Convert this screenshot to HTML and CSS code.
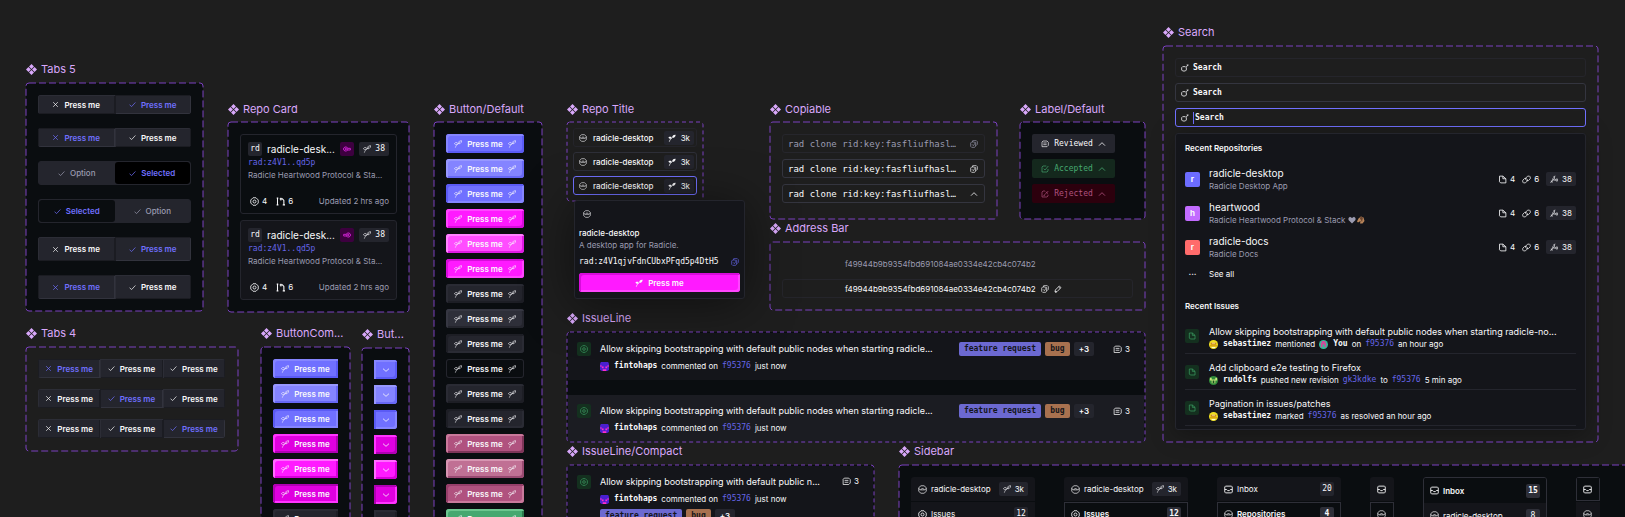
FILE: index.html
```
<!DOCTYPE html>
<html lang="en">
<head>
<meta charset="utf-8">
<title>Components</title>
<link rel="stylesheet" href="styles.css">
</head>
<body>
<svg class="sprite" aria-hidden="true">
  <symbol id="component" viewBox="0 0 12 12"><path d="M6 0 8.700 2.700 6 5.400 3.300 2.700zM6 6.600 8.700 9.300 6 12 3.300 9.300zM2.700 3.300 5.400 6 2.700 8.700 0 6zM9.300 3.300 12 6 9.300 8.700 6.600 6z" fill="currentColor"/></symbol>
  <symbol id="seed" viewBox="0 0 12 12"><path d="M2 11.500C2.500 9 4 7.500 6.500 5.500L9.500 3M0.500 5.500 2 4H4.500L5.500 5 4.500 7 2.500 7zM6.500 5.500 6.500 3.500 8.500 1.500 11.500 1 11 3.500 9 5.500z" fill="none" stroke="currentColor" stroke-width="0.900"/></symbol>
  <symbol id="seedfill" viewBox="0 0 12 12"><path d="M0.500 5.500 2 4H4.500L5.500 5 4.500 7H2.500zM6.500 5.500V3.500L8.500 1.500 11.500 1 11 3.500 9 5.500z" fill="currentColor"/><path d="M2 11.500C2.500 9 4 7.500 6.500 5.500" fill="none" stroke="currentColor" stroke-width="1.200"/></symbol>
  <symbol id="fork" viewBox="0 0 12 12"><path d="M0.500 11.500 5 7.500H9M2 8 2 10.500H4.500M4 5.500V8.500M4 5.500 6.500 7.500M6 5 7.500 1M6 1.500 6 5 8 6.500M9 6H11.500V9H9z" fill="none" stroke="currentColor" stroke-width="0.900"/></symbol>
  <symbol id="x" viewBox="0 0 12 12"><path d="M2 2 10 10M10 2 2 10" fill="none" stroke="currentColor" stroke-width="1.200"/></symbol>
  <symbol id="check" viewBox="0 0 12 12"><path d="M1 6.5 4.500 9.500 11 2.500" fill="none" stroke="currentColor" stroke-width="1.200"/></symbol>
  <symbol id="down" viewBox="0 0 12 12"><path d="M1.500 4 6 8 10.500 4" fill="none" stroke="currentColor" stroke-width="1.200"/></symbol>
  <symbol id="up" viewBox="0 0 12 12"><path d="M1.500 8.500 6 4 10.500 8.500" fill="none" stroke="currentColor" stroke-width="1.200"/></symbol>
  <symbol id="target" viewBox="0 0 12 12"><path d="M4 1H8L11 4V8L8 11H4L1 8V4z" fill="none" stroke="currentColor" stroke-width="1.100"/><circle cx="6" cy="6" r="2" fill="none" stroke="currentColor" stroke-width="1.100"/></symbol>
  <symbol id="patch" viewBox="0 0 12 12"><path d="M2 1V11M1 1.500H3M0.800 10.500H3.200M5 2.500H8.500L10.500 4.500V10.500M9 10.500H12M6.500 1V4.500" fill="none" stroke="currentColor" stroke-width="1.400"/></symbol>
  <symbol id="repo" viewBox="0 0 12 12"><path d="M4 1H8L11 3.500V8.500L8 11H4L1 8.500V3.500zM1 5 3.500 6.500H8.500L11 5M3.500 6.500 6 4 8.500 6.500" fill="none" stroke="currentColor" stroke-width="0.900"/></symbol>
  <symbol id="copy" viewBox="0 0 12 12"><path d="M4 1H9.500L11 2.500V6.500L9.500 8H8.500M1 4.500 2.500 3H6.500L8.500 5V9L7 11H2.500L1 9.500zM3 6.500 5 8.500 8.500 3.500M4 1 3.500 3" fill="none" stroke="currentColor"/></symbol>
  <symbol id="pen" viewBox="0 0 12 12"><path d="M1.500 10.500 2 7.500 8 1.500 10.500 4 4.500 10zM7 3 9 5M1.500 10.500H4" fill="none" stroke="currentColor" stroke-width="1.200"/></symbol>
  <symbol id="comment" viewBox="0 0 12 12"><path d="M3 1.500H9L11 3.500V8L9 10H1.500V3zM3.500 4.500H8.500M3.500 7H8.500" fill="none" stroke="currentColor"/></symbol>
  <symbol id="accepted" viewBox="0 0 12 12"><path d="M8 1.500H3L1.500 3V10.500H9L10.500 9V6M4 5.500 6 7.500 11 1.500" fill="none" stroke="currentColor"/></symbol>
  <symbol id="rejected" viewBox="0 0 12 12"><path d="M6 1.500H3L1.500 3V10.500H9L10.500 9V7M5 7.500 11 1.500M7 2.500 10.500 5.500M3.500 8.500H6" fill="none" stroke="currentColor"/></symbol>
  <symbol id="file" viewBox="0 0 12 12"><path d="M2 1.500H6.500L10.500 5V10.500H3.500L2 9zM6.500 1.500V5H10.500" fill="none" stroke="currentColor" stroke-width="1.100"/></symbol>
  <symbol id="link" viewBox="0 0 12 12"><path d="M5 6.500V4L7.500 1.500H10L11 2.500V5L8.500 7.500H6M7 5.500V8L4.500 10.500H2L1 9.500V7L3.500 4.500H6" fill="none" stroke="currentColor"/></symbol>
  <symbol id="search" viewBox="0 0 12 12"><path d="M2.500 4H6.500L8 5.500V9L6.500 10.500H2.500L1 9V5.500zM7.500 4.800 11 1.300M8.500 1.500H11" fill="none" stroke="currentColor" stroke-width="1.200"/></symbol>
  <symbol id="inbox" viewBox="0 0 12 12"><path d="M2 1.500H10L11 2.500V9.500L10 10.500H2L1 9.500V2.500zM1 6H3.500L5 7.500H7L8.500 6H11" fill="none" stroke="currentColor" stroke-width="1.200"/></symbol>
  <symbol id="key" viewBox="0 0 12 12"><path d="M3 3H5.500L7 5V7.500L5.500 9H3L1 7.500V4.500zM7 5H11V7.500H7M3.500 5H5V7H3.500z" fill="none" stroke="currentColor" stroke-width="1.400"/></symbol>
  <symbol id="keyr" viewBox="0 0 12 12"><path d="M9 3H6.500L5 5V7.500L6.500 9H9L11 7.500V4.500zM5 5H1V7.500H5M8.500 5H7V7H8.500z" fill="none" stroke="currentColor" stroke-width="1.400"/></symbol>
  <symbol id="ava-f" viewBox="0 0 10 10"><path d="M1 0H9L10 2V9L8 10H2L0 9V2z" fill="#4a1fd0"/><path d="M0 4H2V5H0zM8 4H10V5H8zM2 5H4V7H2zM6 5H8V7H6zM3 8H7V10H3z" fill="#ff2fc8"/></symbol>
  <symbol id="ava-s" viewBox="0 0 10 10"><circle cx="5" cy="5" r="5" fill="#f0e020"/><path d="M2 3H8V5H2zM1 6H9V7H1z" fill="#c06a10"/><path d="M3 8H7V9H3z" fill="#fff"/><path d="M3 3H7V4H3z" fill="#fff6b0"/></symbol>
  <symbol id="ava-y" viewBox="0 0 10 10"><circle cx="5" cy="5" r="5" fill="#2fc09a"/><path d="M3 1H7V3H8V8H6V5H4V8H2V3H3z" fill="#d04a9a"/></symbol>
  <symbol id="ava-r" viewBox="0 0 10 10"><circle cx="5" cy="5" r="5" fill="#2f8a3a"/><path d="M1 2H3V4H5V6H5V4H7V2H9V5H7V8H3V5H1z" fill="#c8e87a"/><path d="M4 5H6V8H4z" fill="#145020"/></symbol>
</svg>
<main class="canvas">

<section class="component tabs5">
  <h2><svg><use href="#component"/></svg>Tabs 5</h2>
  <div class="frame dark stack-lg"><svg class="outline"><rect width="100%" height="100%" rx="3"/></svg>
    <div class="tabs"><button class="tab sunk"><svg><use href="#x"/></svg>Press me</button><button class="tab raised accent"><svg><use href="#check"/></svg>Press me</button></div>
    <div class="tabs"><button class="tab raised accent"><svg><use href="#x"/></svg>Press me</button><button class="tab sunk"><svg><use href="#check"/></svg>Press me</button></div>
    <div class="tabs tall boxed"><button class="tab muted"><svg><use href="#check"/></svg>Option</button><button class="tab black accent"><svg><use href="#check"/></svg>Selected</button></div>
    <div class="tabs tall boxed"><button class="tab ink accent"><svg><use href="#check"/></svg>Selected</button><button class="tab muted"><svg><use href="#check"/></svg>Option</button></div>
    <div class="tabs tall"><button class="tab sunk"><svg><use href="#x"/></svg>Press me</button><button class="tab raised accent"><svg><use href="#check"/></svg>Press me</button></div>
    <div class="tabs tall"><button class="tab raised accent"><svg><use href="#x"/></svg>Press me</button><button class="tab sunk"><svg><use href="#check"/></svg>Press me</button></div>
  </div>
</section>

<section class="component high repo-card">
  <h2><svg><use href="#component"/></svg>Repo Card</h2>
  <div class="frame dark stack-sm"><svg class="outline"><rect width="100%" height="100%" rx="3"/></svg>
    <article class="card">
      <div class="card-head"><span class="badge mono">rd</span><span class="name">radicle-desk...</span><span class="badge pink"><svg><use href="#key"/></svg></span><span class="badge wide mono"><svg><use href="#seed"/></svg>38</span></div>
      <p class="mono link">rad:z4V1..qd5p</p>
      <p class="dim">Radicle Heartwood Protocol &amp; Sta...</p>
      <div class="card-foot"><span class="stat"><svg><use href="#target"/></svg>4</span><span class="stat"><svg><use href="#patch"/></svg>6</span><span class="dim push">Updated 2 hrs ago</span></div>
    </article>
    <article class="card float">
      <div class="card-head"><span class="badge mono">rd</span><span class="name">radicle-desk...</span><span class="badge pink"><svg><use href="#keyr"/></svg></span><span class="badge wide mono"><svg><use href="#seed"/></svg>38</span></div>
      <p class="mono link">rad:z4V1..qd5p</p>
      <p class="dim">Radicle Heartwood Protocol &amp; Sta...</p>
      <div class="card-foot"><span class="stat"><svg><use href="#target"/></svg>4</span><span class="stat"><svg><use href="#patch"/></svg>6</span><span class="dim push">Updated 2 hrs ago</span></div>
    </article>
  </div>
</section>

<section class="component tabs4">
  <h2><svg><use href="#component"/></svg>Tabs 4</h2>
  <div class="frame stack-md"><svg class="outline"><rect width="100%" height="100%" rx="3"/></svg>
    <div class="tabs"><button class="tab raised accent"><svg><use href="#x"/></svg>Press me</button><button class="tab sunk"><svg><use href="#check"/></svg>Press me</button><button class="tab sunk"><svg><use href="#check"/></svg>Press me</button></div>
    <div class="tabs"><button class="tab sunk"><svg><use href="#x"/></svg>Press me</button><button class="tab raised accent"><svg><use href="#check"/></svg>Press me</button><button class="tab sunk"><svg><use href="#check"/></svg>Press me</button></div>
    <div class="tabs"><button class="tab sunk"><svg><use href="#x"/></svg>Press me</button><button class="tab sunk"><svg><use href="#check"/></svg>Press me</button><button class="tab raised accent"><svg><use href="#check"/></svg>Press me</button></div>
  </div>
</section>

<section class="component button-combo">
  <h2><svg><use href="#component"/></svg>ButtonCom...</h2>
  <div class="frame dark stack-sm"><svg class="outline"><rect width="100%" height="100%" rx="3"/></svg>
    <button class="btn left violet"><svg><use href="#seed"/></svg>Press me</button>
    <button class="btn left violet hover"><svg><use href="#seed"/></svg>Press me</button>
    <button class="btn left violet active"><svg><use href="#seed"/></svg>Press me</button>
    <button class="btn left magenta"><svg><use href="#seed"/></svg>Press me</button>
    <button class="btn left magenta hover"><svg><use href="#seed"/></svg>Press me</button>
    <button class="btn left magenta active"><svg><use href="#seed"/></svg>Press me</button>
    <button class="btn left gray"><svg><use href="#seed"/></svg>Press me</button>
  </div>
</section>

<section class="component button-arrow">
  <h2><svg><use href="#component"/></svg>But...</h2>
  <div class="frame dark stack-sm"><svg class="outline"><rect width="100%" height="100%" rx="3"/></svg>
    <button class="btn right violet" aria-label="More"><svg><use href="#down"/></svg></button>
    <button class="btn right violet hover" aria-label="More"><svg><use href="#down"/></svg></button>
    <button class="btn right violet active" aria-label="More"><svg><use href="#down"/></svg></button>
    <button class="btn right magenta" aria-label="More"><svg><use href="#down"/></svg></button>
    <button class="btn right magenta hover" aria-label="More"><svg><use href="#down"/></svg></button>
    <button class="btn right magenta active" aria-label="More"><svg><use href="#down"/></svg></button>
    <button class="btn right gray" aria-label="More"><svg><use href="#down"/></svg></button>
  </div>
</section>

<section class="component high button-default">
  <h2><svg><use href="#component"/></svg>Button/Default</h2>
  <div class="frame dark stack-sm"><svg class="outline"><rect width="100%" height="100%" rx="3"/></svg>
    <button class="btn violet"><svg><use href="#seed"/></svg>Press me<svg><use href="#seed"/></svg></button>
    <button class="btn violet hover"><svg><use href="#seed"/></svg>Press me<svg><use href="#seed"/></svg></button>
    <button class="btn violet active"><svg><use href="#seed"/></svg>Press me<svg><use href="#seed"/></svg></button>
    <button class="btn pinkish"><svg><use href="#seed"/></svg>Press me<svg><use href="#seed"/></svg></button>
    <button class="btn pinkish hover"><svg><use href="#seed"/></svg>Press me<svg><use href="#seed"/></svg></button>
    <button class="btn pinkish active"><svg><use href="#seed"/></svg>Press me<svg><use href="#seed"/></svg></button>
    <button class="btn gray"><svg><use href="#seed"/></svg>Press me<svg><use href="#seed"/></svg></button>
    <button class="btn gray hover"><svg><use href="#seed"/></svg>Press me<svg><use href="#seed"/></svg></button>
    <button class="btn gray active"><svg><use href="#seed"/></svg>Press me<svg><use href="#seed"/></svg></button>
    <button class="btn hollow"><svg><use href="#seed"/></svg>Press me<svg><use href="#seed"/></svg></button>
    <button class="btn gray"><svg><use href="#seed"/></svg>Press me<svg><use href="#seed"/></svg></button>
    <button class="btn gray active"><svg><use href="#seed"/></svg>Press me<svg><use href="#seed"/></svg></button>
    <button class="btn rose"><svg><use href="#seed"/></svg>Press me<svg><use href="#seed"/></svg></button>
    <button class="btn rose hover"><svg><use href="#seed"/></svg>Press me<svg><use href="#seed"/></svg></button>
    <button class="btn rose active"><svg><use href="#seed"/></svg>Press me<svg><use href="#seed"/></svg></button>
    <button class="btn green"><svg><use href="#seed"/></svg>Press me<svg><use href="#seed"/></svg></button>
  </div>
</section>

<section class="component issue-line">
  <h2><svg><use href="#component"/></svg>IssueLine</h2>
  <div class="frame dark"><svg class="outline fine"><rect width="100%" height="100%" rx="3"/></svg>
    <article class="issue">
      <span class="state"><svg><use href="#target"/></svg></span>
      <div class="issue-text"><p class="issue-title">Allow skipping bootstrapping with default public nodes when starting radicle...</p>
      <p class="meta"><svg><use href="#ava-f"/></svg><b class="mono">fintohaps</b> commented on <a class="mono link" href="#f95376">f95376</a> just now</p></div>
      <div class="labels"><span class="label violet">feature request</span><span class="label brown">bug</span><span class="label more">+3</span><span class="stat count"><svg><use href="#comment"/></svg>3</span></div>
    </article>
    <article class="issue lit">
      <span class="state"><svg><use href="#target"/></svg></span>
      <div class="issue-text"><p class="issue-title">Allow skipping bootstrapping with default public nodes when starting radicle...</p>
      <p class="meta"><svg><use href="#ava-f"/></svg><b class="mono">fintohaps</b> commented on <a class="mono link" href="#f95376">f95376</a> just now</p></div>
      <div class="labels"><span class="label violet">feature request</span><span class="label brown">bug</span><span class="label more">+3</span><span class="stat count"><svg><use href="#comment"/></svg>3</span></div>
    </article>
  </div>
</section>

<section class="component issue-compact">
  <h2><svg><use href="#component"/></svg>IssueLine/Compact</h2>
  <div class="frame dark"><svg class="outline fine"><rect width="100%" height="100%" rx="3"/></svg>
    <article class="issue">
      <span class="state"><svg><use href="#target"/></svg></span>
      <div class="issue-text"><p class="issue-title">Allow skipping bootstrapping with default public n...</p>
      <p class="meta"><svg><use href="#ava-f"/></svg><b class="mono">fintohaps</b> commented on <a class="mono link" href="#f95376">f95376</a> just now</p>
      <div class="labels below"><span class="label violet">feature request</span><span class="label brown">bug</span><span class="label more">+3</span></div></div>
      <div class="labels"><span class="stat"><svg><use href="#comment"/></svg>3</span></div>
    </article>
  </div>
</section>

<section class="component high repo-title">
  <h2><svg><use href="#component"/></svg>Repo Title</h2>
  <div class="frame"><svg class="outline fine"><rect width="100%" height="100%" rx="3"/></svg>
    <button class="title-row"><svg><use href="#repo"/></svg><span>radicle-desktop</span><span class="badge wide"><svg><use href="#seedfill"/></svg>3k</span></button>
    <button class="title-row hover"><svg><use href="#repo"/></svg><span>radicle-desktop</span><span class="badge wide"><svg><use href="#seedfill"/></svg>3k</span></button>
    <button class="title-row open"><svg><use href="#repo"/></svg><span>radicle-desktop</span><span class="badge wide"><svg><use href="#seedfill"/></svg>3k</span></button>
    <div class="popover">
      <svg class="popover-icon"><use href="#repo"/></svg>
      <p class="strong">radicle-desktop</p>
      <p class="dim">A desktop app for Radicle.</p>
      <p class="mono popover-id">rad:z4V1qjvFdnCUbxPFqd5p4DtH5<svg class="link"><use href="#copy"/></svg></p>
      <button class="btn pinkish active"><svg><use href="#seedfill"/></svg>Press me</button>
    </div>
  </div>
</section>

<section class="component high copiable">
  <h2><svg><use href="#component"/></svg>Copiable</h2>
  <div class="frame stack-sm"><svg class="outline"><rect width="100%" height="100%" rx="3"/></svg>
    <button class="copy mono rest">rad clone rid:key:fasfliufhasl…<svg><use href="#copy"/></svg></button>
    <button class="copy mono">rad clone rid:key:fasfliufhasl…<svg><use href="#copy"/></svg></button>
    <button class="copy mono">rad clone rid:key:fasfliufhasl…<svg><use href="#up"/></svg></button>
  </div>
</section>

<section class="component high label-default">
  <h2><svg><use href="#component"/></svg>Label/Default</h2>
  <div class="frame dark stack-sm"><svg class="outline"><rect width="100%" height="100%" rx="3"/></svg>
    <button class="verdict mono"><svg><use href="#comment"/></svg>Reviewed<svg><use href="#up"/></svg></button>
    <button class="verdict mono ok"><svg><use href="#accepted"/></svg>Accepted<svg><use href="#up"/></svg></button>
    <button class="verdict mono bad"><svg><use href="#rejected"/></svg>Rejected<svg><use href="#up"/></svg></button>
  </div>
</section>

<section class="component address-bar">
  <h2><svg><use href="#component"/></svg>Address Bar</h2>
  <div class="frame stack-sm"><svg class="outline"><rect width="100%" height="100%" rx="3"/></svg>
    <div class="address dim">f49944b9b9354fbd691084ae0334e42cb4c074b2</div>
    <div class="address boxed">f49944b9b9354fbd691084ae0334e42cb4c074b2<svg><use href="#copy"/></svg><svg><use href="#pen"/></svg></div>
  </div>
</section>

<section class="component sidebar">
  <h2><svg><use href="#component"/></svg>Sidebar</h2>
  <div class="frame dark"><svg class="outline"><rect width="100%" height="100%" rx="3"/></svg>
    <nav class="menu">
      <a class="item" href="#repo-home"><svg><use href="#repo"/></svg>radicle-desktop<span class="badge wide"><svg><use href="#seed"/></svg>3k</span></a>
      <a class="item" href="#issues"><svg><use href="#target"/></svg>Issues<span class="badge mono">12</span></a>
    </nav>
    <nav class="menu">
      <a class="item" href="#repo-home"><svg><use href="#repo"/></svg>radicle-desktop<span class="badge wide"><svg><use href="#seed"/></svg>3k</span></a>
      <a class="item current" href="#issues"><svg><use href="#target"/></svg>Issues<span class="badge mono bright">12</span></a>
    </nav>
    <nav class="menu">
      <a class="item" href="#inbox-all"><svg><use href="#inbox"/></svg>Inbox<span class="badge mono">20</span></a>
      <a class="item current" href="#repos"><svg><use href="#repo"/></svg>Repositories<span class="badge mono bright">4</span></a>
    </nav>
    <nav class="menu slim">
      <a class="item" href="#inbox-all" aria-label="Inbox"><svg><use href="#inbox"/></svg></a>
      <a class="item current" href="#repos" aria-label="Repositories"><svg><use href="#repo"/></svg></a>
    </nav>
    <nav class="menu outlined">
      <a class="item current" href="#inbox-all"><svg><use href="#inbox"/></svg>Inbox<span class="badge mono bright">15</span></a>
      <a class="item" href="#repo-home"><svg><use href="#repo"/></svg>radicle-desktop<span class="badge mono bright">8</span></a>
    </nav>
    <nav class="menu slim">
      <a class="item current" href="#inbox-all" aria-label="Inbox"><svg><use href="#inbox"/></svg></a>
      <a class="item" href="#repos" aria-label="Repositories"><svg><use href="#repo"/></svg></a>
    </nav>
  </div>
</section>

<section class="component search">
  <h2><svg><use href="#component"/></svg>Search</h2>
  <div class="frame stack-sm"><svg class="outline"><rect width="100%" height="100%" rx="3"/></svg>
    <label class="field rest"><svg><use href="#search"/></svg><input class="mono" type="text" placeholder="Search" aria-label="Search, default"></label>
    <label class="field"><svg><use href="#search"/></svg><input class="mono" type="text" placeholder="Search" aria-label="Search, hover"></label>
    <label class="field focus"><svg><use href="#search"/></svg><input class="mono" type="text" placeholder="Search" aria-label="Search, focused"></label>
    <div class="panel">
      <h3>Recent Repositories</h3>
      <ul class="repos">
        <li><span class="letter blue">r</span><div><p class="name">radicle-desktop</p><p class="dim">Radicle Desktop App</p></div><div class="stats"><span class="stat"><svg><use href="#file"/></svg>4</span><span class="stat"><svg><use href="#link"/></svg>6</span><span class="badge wide"><svg><use href="#fork"/></svg>38</span></div></li>
        <li><span class="letter purple">h</span><div><p class="name">heartwood</p><p class="dim">Radicle Heartwood Protocol &amp; Stack <svg class="emoji" viewBox="0 0 17 8"><path d="M4 7.500 0.500 4V2L2 0.800 4 2 6 0.800 7.500 2V4z" fill="#9b9bb0"/><path d="M13 0.500 15.500 1.500 16.500 5 14.500 7.500H12L12.500 5 10 6.500 9 5.500 10.500 2.500z" fill="#b9855a"/><path d="M12.500 0.500 15 1.500 14 6 12 2.500z" fill="#6b4630"/></svg></p></div><div class="stats"><span class="stat"><svg><use href="#file"/></svg>4</span><span class="stat"><svg><use href="#link"/></svg>6</span><span class="badge wide"><svg><use href="#fork"/></svg>38</span></div></li>
        <li><span class="letter red">r</span><div><p class="name">radicle-docs</p><p class="dim">Radicle Docs</p></div><div class="stats"><span class="stat"><svg><use href="#file"/></svg>4</span><span class="stat"><svg><use href="#link"/></svg>6</span><span class="badge wide"><svg><use href="#fork"/></svg>38</span></div></li>
      </ul>
      <a class="see-all" href="#all"><span class="dots">···</span>See all</a>
      <h3>Recent Issues</h3>
      <ul class="recent">
        <li><span class="state"><svg><use href="#file"/></svg></span><div class="issue-text"><p class="issue-title">Allow skipping bootstrapping with default public nodes when starting radicle-no...</p><p class="meta"><svg><use href="#ava-s"/></svg><b class="mono">sebastinez</b> mentioned <svg class="inner"><use href="#ava-y"/></svg><b class="mono">You</b> on <a class="mono link" href="#f95376">f95376</a> an hour ago</p></div></li>
        <li><span class="state"><svg><use href="#file"/></svg></span><div class="issue-text"><p class="issue-title">Add clipboard e2e testing to Firefox</p><p class="meta"><svg><use href="#ava-r"/></svg><b class="mono">rudolfs</b> pushed new revision <a class="mono link" href="#gk3kdke">gk3kdke</a> to <a class="mono link" href="#f95376">f95376</a> 5 min ago</p></div></li>
        <li><span class="state"><svg><use href="#file"/></svg></span><div class="issue-text"><p class="issue-title">Pagination in issues/patches</p><p class="meta"><svg><use href="#ava-s"/></svg><b class="mono">sebastinez</b> marked <a class="mono link" href="#f95376">f95376</a> as resolved an hour ago</p></div></li>
      </ul>
    </div>
  </div>
</section>

</main>
</body>
</html>
```
FILE: styles.css
```
:root {
  --canvas: #1e1e1e;
  --ink: #0a0d10;
  --float: #14151a;
  --hover: #1b1c22;
  --ghost: #24252d;
  --line: #2e2f38;
  --text: #f9f9fb;
  --dim: #9b9bb0;
  --accent: #7070ff;
}
* { box-sizing: border-box; margin: 0; padding: 0; }
body {
  background: var(--canvas);
  color: var(--text);
  font: 400 8px/12px Inter, sans-serif;
}
button, input { font: inherit; color: inherit; border: 0; background: none; }
button { display: flex; align-items: center; justify-content: center; white-space: nowrap; }
a { color: inherit; text-decoration: none; }
ul { list-style: none; }
svg { width: 9px; height: 9px; flex: none; overflow: visible; }
p { white-space: nowrap; }
.sprite { position: absolute; width: 0; height: 0; }
.mono { font-family: "DejaVu Sans Mono", monospace; }
.dim { color: var(--dim); }
.link { color: #6565e8; }
.strong { font-weight: 500; }
.name { font-size: 10px; line-height: 13px; white-space: nowrap; }

/* Free canvas with one placed section per component */
.canvas { position: relative; height: 100vh; overflow: hidden; }
.component { position: absolute; display: flex; flex-direction: column; gap: 7px; }
.component.high { gap: 6px; }
.component h2 {
  display: flex; align-items: center; gap: 4px;
  font-size: 11px; line-height: 14px; font-weight: 400;
  color: #d9a8fb; white-space: nowrap;
}
.component h2 svg { width: 11px; height: 11px; }
.frame { position: relative; padding: 12px; display: flex; flex-direction: column; border-radius: 4px; }
.frame.dark { background: var(--ink); }
.outline { position: absolute; left: 0; top: 0; width: 100%; height: 100%; pointer-events: none; }
.outline rect { fill: none; stroke: #7a40bf; stroke-width: 1; stroke-dasharray: 7 3; }
.outline.fine rect { stroke-dasharray: 4 3; }
.stack-lg { gap: 14px; }
.stack-md { gap: 11px; }
.stack-sm { gap: 6px; }

.tabs5 { left: 26px; top: 62px; width: 177px; }
.repo-card { left: 228px; top: 102px; width: 181px; }
.tabs4 { left: 26px; top: 326px; width: 212px; }
.button-combo { left: 261px; top: 326px; width: 89px; }
.button-arrow { left: 362px; top: 327px; width: 47px; }
.button-default { left: 434px; top: 102px; width: 108px; }
.repo-title { left: 567px; top: 102px; width: 136px; }
.copiable { left: 770px; top: 102px; width: 227px; }
.label-default { left: 1020px; top: 102px; width: 125px; }
.address-bar { left: 770px; top: 221px; width: 375px; }
.issue-line { left: 567px; top: 311px; width: 578px; }
.issue-compact { left: 567px; top: 444px; width: 307px; }
.sidebar { left: 899px; top: 444px; width: 760px; }
.search { left: 1163px; top: 25px; width: 435px; }

/* Tabs */
.tabs { display: flex; height: 19px; background: var(--ghost); border-radius: 3px; overflow: hidden; }
.tabs.tall { height: 24px; }
.tabs.boxed { border: 1px solid var(--ghost); }
.tab { flex: 1; gap: 5px; font-weight: 600; background: var(--ghost); }
.tab svg { width: 7px; height: 7px; }
.tab.raised { box-shadow: inset 1px 1px 0 #1b1c22, inset -1px -1px 0 #32333d; }
.tab.sunk { box-shadow: inset 1px 1px 0 #2c2d36, inset -1px -1px 0 #1b1c22; }
.tab.accent { color: var(--accent); }
.tab.muted { color: var(--dim); font-weight: 500; }
.tab.black { background: #000; border-radius: 3px; }
.tab.ink { background: var(--ink); border-radius: 3px; }
.tabs4 .frame { padding-right: 13px; padding-bottom: 13px; }

/* Buttons */
.btn {
  height: 19px; gap: 5px; border-radius: 3px; font-weight: 600;
  background: var(--face);
  box-shadow: inset 2px 2px 0 var(--lit), inset -2px -2px 0 var(--shade);
}
.btn svg { width: 8px; height: 8px; }
.button-default .btn { width: 78px; }
.btn.left { border-radius: 3px 0 0 3px; }
.btn.right { border-radius: 0 3px 3px 0; }
.btn.active { box-shadow: inset 2px 2px 0 var(--shade), inset -2px -2px 0 var(--lit); }
.violet { --face: #7070ff; --lit: #8585ff; --shade: #5b5bf5; }
.violet.hover { --face: #8484ff; --lit: #9797ff; --shade: #6868f5; }
.magenta { --face: #e000e0; --lit: #ff35ff; --shade: #b000b4; }
.magenta.hover { --face: #ff1aff; --lit: #ff6bff; --shade: #d600da; }
.pinkish { --face: #ff1aff; --lit: #ff45ff; --shade: #d80cdc; }
.pinkish.hover { --face: #ff4dff; --lit: #ff84ff; --shade: #e01ae4; }
.gray { --face: #24252d; --lit: #2a2b34; --shade: #1d1e25; }
.gray.hover { --face: #2e2f39; --lit: #363742; --shade: #24252d; }
.rose { --face: #b0527f; --lit: #c9799b; --shade: #7f3559; }
.rose.hover { --face: #c07094; --lit: #d795b2; --shade: #9a4a72; }
.rose.active { --shade: #963f6a; }
.green { --face: #46a870; --lit: #6cc68f; --shade: #2c7a4c; }
.btn.hollow { background: var(--ink); box-shadow: inset 0 0 0 1px var(--ghost); }

/* Badges */
.badge {
  display: inline-flex; align-items: center; justify-content: center; gap: 4px;
  min-width: 14px; height: 14px; padding: 0 2px; border-radius: 2px;
  background: var(--ghost); line-height: 14px; flex: none;
}
.badge.wide { padding: 0 4px; }
.badge.bright { background: var(--line); }
.badge svg { width: 8px; height: 8px; }
.badge.pink { background: #3d003f; color: #d024d4; }
.stat { display: inline-flex; align-items: center; gap: 3px; font-size: 8px; }

/* Repo card */
.card {
  display: flex; flex-direction: column;
  padding: 7px 7px 6px; border: 1px solid var(--ghost); border-radius: 3px; background: var(--ink);
}
.card.float { background: var(--float); }
.card-head { display: flex; align-items: center; gap: 5px; margin-bottom: 1px; }
.card-head .name { flex: 1; min-width: 0; }
.card-foot { display: flex; align-items: center; gap: 9px; margin-top: 14px; padding-left: 2px; }
.push { margin-left: auto; }

/* Repo title */
.repo-title .frame { padding: 6px; gap: 5px; }
.title-row {
  height: 19px; padding: 0 2px 0 5px; gap: 6px; justify-content: flex-start;
  border: 1px solid #24242a; border-radius: 3px; font-weight: 500;
}
.title-row .badge { margin-left: auto; gap: 5px; font-size: 8px; font-weight: 400; }
.title-row > svg { width: 8px; height: 8px; }
.title-row.hover { border-color: var(--line); }
.title-row.open { border-color: var(--accent); }
.popover {
  position: absolute; left: 7px; top: 78px; width: 171px; z-index: 2;
  display: flex; flex-direction: column; padding: 5px 4px 6px;
  background: var(--float); border: 1px solid var(--ghost); border-radius: 3px;
  box-shadow: 0 4px 48px rgba(0, 0, 0, .5);
}
.popover-icon { width: 8px; height: 8px; margin: 4px 4px 9px; }
.popover-id { display: flex; align-items: center; justify-content: space-between; margin: 5px 0; padding-right: 1px; }
.popover-id svg { width: 8px; height: 8px; }

/* Copiable */
.copy {
  height: 19px; padding: 0 6px 0 5px; justify-content: space-between; font-size: 9px;
  border: 1px solid #34353f; border-radius: 3px;
}
.copy.rest { color: var(--dim); border-color: #26262c; }
.copy svg { width: 8px; height: 8px; }
.copiable .frame, .label-default .frame { padding-bottom: 16px; }

/* Label */
.verdict { width: 83px; height: 19px; gap: 5px; border-radius: 2px; background: var(--ghost); }
.verdict svg { width: 8px; height: 8px; }
.verdict.ok { background: #14281d; color: #46a870; }
.verdict.bad { background: #2c000d; color: #b0527f; }

/* Address bar */
.address { height: 19px; display: flex; align-items: center; gap: 5px; padding-left: 63px; }
.address.boxed { border: 1px solid #25252b; border-radius: 3px; padding-left: 62px; }
.address svg { width: 8px; height: 8px; }

/* Issues */
.state {
  width: 14px; height: 14px; border-radius: 2px; flex: none;
  display: flex; align-items: center; justify-content: center;
  background: #14301f; color: #3b9a60;
}
.state svg { width: 8px; height: 8px; }
.issue { display: flex; align-items: flex-start; gap: 9px; padding: 9px 14px 8px 9px; background: var(--float); }
.issue.lit { background: var(--hover); }
.issue-text { flex: 1; min-width: 0; }
.issue-title { font-size: 9px; line-height: 14px; }
.meta { display: flex; align-items: center; gap: 4px; line-height: 12px; }
.meta svg { width: 9px; height: 9px; margin-right: 1px; }
.issue .meta { margin-top: 4px; }
.issue-line .frame { padding: 1px 1px 0; gap: 15px; }
.issue-compact .frame { padding: 1px; }
.labels { display: flex; align-items: center; gap: 4px; }
.label {
  height: 14px; padding: 0 5px; border-radius: 2px;
  font: 600 8px/14px "DejaVu Sans Mono", monospace; color: #14151a;
}
.label.violet { background: #6c69d1; }
.label.brown { background: #a8714f; }
.label.more { background: var(--ghost); color: var(--text); font-family: Inter, sans-serif; }
.labels .count { margin-left: 15px; }
.labels.below { margin-top: 4px; }

/* Sidebar */
.sidebar .frame { flex-direction: row; gap: 29px; height: 300px; }
.menu { width: 124px; display: flex; flex-direction: column; gap: 1px; border-radius: 3px; overflow: hidden; align-self: flex-start; }
.menu.slim { width: 24px; }
.item { display: flex; align-items: center; gap: 4px; height: 24px; padding: 0 7px; background: var(--float); white-space: nowrap; }
.item .badge { margin-left: auto; }
.item.current { font-weight: 600; background: var(--ink); box-shadow: inset 0 0 0 1px var(--line); }
.menu.outlined { border: 1px solid var(--line); gap: 0; }
.menu.outlined .item { height: 25px; padding: 0 6px; }
.menu.outlined .item.current { box-shadow: none; }

/* Search */
.field {
  height: 19px; display: flex; align-items: center; gap: 4px; padding: 0 5px;
  border: 1px solid #34353f; border-radius: 3px;
}
.field svg { width: 8px; height: 8px; }
.field.rest { border-color: #25252b; }
.field.focus { border-color: var(--accent); }
.field input { flex: 1; height: 12px; min-width: 0; font-size: 8px; font-weight: 700; outline: 0; }
.field.focus input { border-left: 1px solid var(--accent); padding-left: 1px; }
.field input::placeholder { color: var(--text); opacity: 1; }
.panel {
  padding: 8px 9px 3px; background: var(--float);
  border: 1px solid var(--ghost); border-radius: 3px; box-shadow: 0 4px 24px rgba(0, 0, 0, .35);
}
.panel h3 { font-size: 8px; line-height: 12px; font-weight: 600; }
.repos { margin: 8px 0 4px; }
.repos li { display: flex; align-items: center; gap: 9px; height: 34px; }
.stats { display: flex; align-items: center; gap: 7px; margin-left: auto; }
.letter { width: 15px; height: 15px; border-radius: 2px; font-weight: 700; line-height: 15px; text-align: center; }
.letter.blue { background: #6c6cff; }
.letter.purple { background: #c26bff; }
.letter.red { background: #ff6b6b; }
.emoji { width: 17px; height: 8px; vertical-align: -1px; }
.see-all { display: flex; gap: 9px; margin-bottom: 20px; }
.dots { width: 15px; text-align: center; font-weight: 700; }
.recent { margin-top: 6px; }
.recent li { display: flex; gap: 10px; padding: 7px 0 3px; height: 36px; border-bottom: 1px solid var(--ghost); }
.recent .state { margin-top: 4px; }
.recent .issue-title { line-height: 13px; }
```
